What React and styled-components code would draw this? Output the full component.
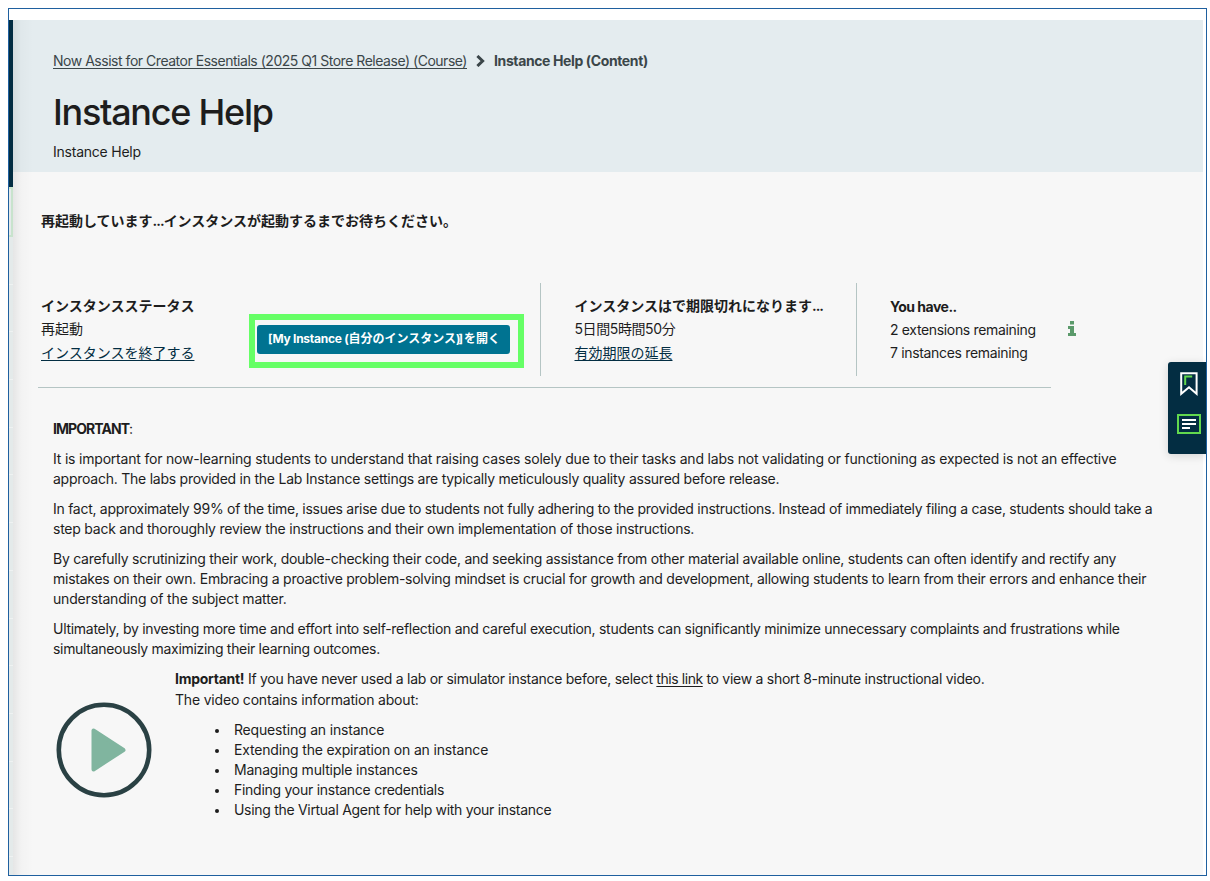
import React from "react";
import styled, { createGlobalStyle } from "styled-components";

const GlobalStyle = createGlobalStyle`
  * {
    box-sizing: border-box;
  }
  body {
    margin: 0;
    background: #ffffff;
    color: #1d1d1d;
    font-family: Inter, "Noto Sans CJK JP", sans-serif;
    font-size: 14px;
    line-height: 20px;
  }
`;

const edgeShadow =
  "linear-gradient(to right, rgba(0, 0, 0, 0.07), rgba(0, 0, 0, 0.02) 8px, rgba(0, 0, 0, 0) 20px)";

const Frame = styled.div`
  position: relative;
  display: flex;
  width: 1199px;
  height: 868px;
  margin: 8px 0 0 8px;
  padding: 11px 3px 0 0;
  border: 1px solid #1f609f;
  overflow: hidden;
`;

const Rail = styled.div`
  flex: none;
  display: flex;
  flex-direction: column;
  width: 4px;
  background: #e4eaea;
`;

const RailTop = styled.div`
  flex: none;
  height: 167px;
  background: #032d42;
`;

const RailItem = styled.div`
  flex: none;
  height: 50px;
  border: 2px solid #c8e3cd;
  border-left: none;
`;

const RailRow = styled.div`
  flex: none;
  height: 47.7px;
  border-bottom: 1px solid #eff2f2;
`;

const Page = styled.main`
  flex: 1;
  min-width: 0;
  background: ${edgeShadow} #f7f7f7;
`;

const Header = styled.header`
  height: 152px;
  padding: 31px 40px 0;
  background: ${edgeShadow} #e4ecef;
`;

const Breadcrumb = styled.nav`
  display: flex;
  align-items: center;
  color: #3b4649;
  white-space: nowrap;
`;

const Chevron = styled.svg`
  width: 10px;
  height: 12px;
  margin: 0 8px 0 9px;
`;

const Title = styled.h1`
  margin: 19px 0 0;
  font-size: 36px;
  line-height: 44px;
  font-weight: 500;
`;

const Subtitle = styled.p`
  margin: 8px 0 0;
`;

const Line = styled.span`
  display: block;
  width: max-content;
  white-space: nowrap;
  letter-spacing: ${props => props.$spacing || 0}px;
`;

const Tight = styled.span`
  letter-spacing: ${props => props.$spacing}px;
`;

const Link = styled.a`
  color: ${props => props.$color || "inherit"};
  text-decoration: underline;
  text-underline-offset: 2px;
`;

const Notice = styled.p`
  margin: 39px 0 0 28px;
  font-weight: 700;
`;

const StatusBar = styled.section`
  display: flex;
  width: 1013px;
  height: 157px;
  margin-left: 25px;
  padding: 52px 0 11px;
  border-bottom: 1px solid #b5c5c4;
`;

const StatusCell = styled.div`
  flex: none;
  display: flex;
  width: ${props => props.$width}px;
  padding: ${props => props.$padding};
  border-right: ${props => (props.$last ? "none" : "1px solid #b5c5c4")};
`;

const StatusText = styled.div`
  flex: none;
  width: ${props => props.$width || "auto"};
  line-height: ${props => props.$leading || 23.4}px;
  padding-top: ${props => props.$top || 11}px;
`;

const Highlight = styled.div`
  flex: none;
  width: 275px;
  height: 54px;
  margin: 31px 0 0 55px;
  padding: 5px 8px 8px 2px;
  border: 6px solid #66ff66;
`;

const OpenButton = styled.button`
  display: flex;
  align-items: center;
  justify-content: center;
  width: 253px;
  height: 29px;
  padding: 0 0 4px;
  border: none;
  border-radius: 3px;
  background: #007391;
  color: #ffffff;
  font: 700 12px Inter, "Noto Sans CJK JP", sans-serif;
`;

const InfoIcon = styled.svg`
  flex: none;
  width: 8px;
  height: 15px;
  margin: 38px 0 0 32px;
`;

const Article = styled.article`
  padding: 31px 40px 0;
`;

const Paragraph = styled.p`
  margin: 0 0 10px;
`;

const Video = styled.section`
  display: flex;
`;

const PlayIcon = styled.svg`
  flex: none;
  width: 96px;
  height: 96px;
  margin: 33px 23px 0 3px;
`;

const VideoIntro = styled.div`
  margin-top: -1px;
  line-height: 21px;
`;

const Topics = styled.ul`
  margin: 10px 0 0;
  padding-left: 55px;
`;

const Topic = styled.li`
  padding-left: 4px;

  &::marker {
    font-size: 12px;
  }
`;

const SideTools = styled.aside`
  position: absolute;
  top: 353px;
  right: 0;
  display: flex;
  flex-direction: column;
  align-items: center;
  width: 38px;
  height: 92px;
  padding: 10px 0 0 4px;
  gap: 18px;
  border-radius: 3px 0 0 3px;
  background: #032d42;
  box-shadow: 0 2px 10px rgba(0, 0, 0, 0.14);
`;

const topics = [
  ["Requesting an instance", -0.18],
  ["Extending the expiration on an instance", -0.17],
  ["Managing multiple instances", -0.2],
  ["Finding your instance credentials", -0.27],
  ["Using the Virtual Agent for help with your instance", -0.3],
];

const paragraphs = [
  [
    ["It is important for now-learning students to understand that raising cases solely due to their tasks and labs not validating or functioning as expected is not an effective", -0.2],
    ["approach. The labs provided in the Lab Instance settings are typically meticulously quality assured before release.", -0.245],
  ],
  [
    ["In fact, approximately 99% of the time, issues arise due to students not fully adhering to the provided instructions. Instead of immediately filing a case, students should take a", -0.277],
    ["step back and thoroughly review the instructions and their own implementation of those instructions.", -0.24],
  ],
  [
    ["By carefully scrutinizing their work, double-checking their code, and seeking assistance from other material available online, students can often identify and rectify any", -0.25],
    ["mistakes on their own. Embracing a proactive problem-solving mindset is crucial for growth and development, allowing students to learn from their errors and enhance their", -0.25],
    ["understanding of the subject matter.", -0.17],
  ],
  [
    ["Ultimately, by investing more time and effort into self-reflection and careful execution, students can significantly minimize unnecessary complaints and frustrations while", -0.284],
    ["simultaneously maximizing their learning outcomes.", -0.31],
  ],
];

const InstanceStatus = () => (
  <StatusBar>
    <StatusCell $width={503} $padding="0 0 0 3px">
      <StatusText>
        <Line as="strong">インスタンスステータス</Line>
        <Line>再起動</Line>
        <Line>
          <Link href="#" $color="#032d42">インスタンスを終了する</Link>
        </Line>
      </StatusText>
      <Highlight>
        <OpenButton>
          <Line>
            <Tight $spacing={-0.25}>[My Instance (</Tight>自分のインスタンス<Tight $spacing={-2}>)]</Tight> を開く
          </Line>
        </OpenButton>
      </Highlight>
    </StatusCell>
    <StatusCell $width={316} $padding="0 0 0 33.5px">
      <StatusText>
        <Line as="strong">
          インスタンスはで期限切れになります<Tight $spacing={-1}>...</Tight>
        </Line>
        <Line $spacing={-0.4}>5日間5時間50分</Line>
        <Line>
          <Link href="#" $color="#032d42">有効期限の延長</Link>
        </Line>
      </StatusText>
    </StatusCell>
    <StatusCell $last $width={194} $padding="0 0 0 33px">
      <StatusText $top={12} $leading={23.1} $width="146px">
        <Line as="strong" $spacing={-0.5}>You have..</Line>
        <Line $spacing={-0.34}>2 extensions remaining</Line>
        <Line $spacing={-0.33}>7 instances remaining</Line>
      </StatusText>
      <InfoIcon viewBox="0 0 8 15" fill="#5b9a6b">
        <path d="M2 0h4v3.5H2zM0 5h6v7h2v3H0v-3h2V8H0z" />
      </InfoIcon>
    </StatusCell>
  </StatusBar>
);

const VideoHelp = () => (
  <Video>
    <PlayIcon viewBox="0 0 96 96">
      <circle cx="48" cy="48" r="45.2" fill="none" stroke="#2a4144" strokeWidth="4.6" />
      <path d="M37.5 28.5v39l30-19.5z" fill="#80b59f" stroke="#80b59f" strokeWidth="4" strokeLinejoin="round" />
    </PlayIcon>
    <div>
      <VideoIntro>
        <Line $spacing={-0.275}>
          <strong>Important!</strong> If you have never used a lab or simulator instance before, select{" "}
          <Tight $spacing={-0.44}>
            <Link href="#">this link</Link>
          </Tight>{" "}
          to view a short 8-minute instructional video.
        </Line>
        <Line $spacing={-0.19}>The video contains information about:</Line>
      </VideoIntro>
      <Topics>
        {topics.map(([text, spacing]) => (
          <Topic key={text}>
            <Line $spacing={spacing}>{text}</Line>
          </Topic>
        ))}
      </Topics>
    </div>
  </Video>
);

export default function App() {
  return (
    <>
      <GlobalStyle />
      <Frame>
        <Rail>
          <RailTop />
          <RailItem />
          {Array.from({ length: 13 }, (_, i) => (
            <RailRow key={i} />
          ))}
        </Rail>
        <Page>
          <Header>
            <Breadcrumb>
              <Line $spacing={-0.475}>
                <Link href="#">Now Assist for Creator Essentials (2025 Q1 Store Release) (Course)</Link>
              </Line>
              <Chevron viewBox="0 0 10 12" fill="none" stroke="#3b4649" strokeWidth="3">
                <path d="M1.4 1 6.6 6 1.4 11" />
              </Chevron>
              <Line as="strong" $spacing={-0.38}>Instance Help (Content)</Line>
            </Breadcrumb>
            <Title>
              <Line $spacing={-1.27}>Instance Help</Line>
            </Title>
            <Subtitle>
              <Line $spacing={-0.23}>Instance Help</Line>
            </Subtitle>
          </Header>
          <Notice>
            <Line>
              再起動しています<Tight $spacing={-1}>...</Tight>インスタンスが起動するまでお待ちください。
            </Line>
          </Notice>
          <InstanceStatus />
          <Article>
            <Paragraph>
              <Line $spacing={-0.95}>
                <strong>IMPORTANT</strong>:
              </Line>
            </Paragraph>
            {paragraphs.map((lines, i) => (
              <Paragraph key={i}>
                {lines.map(([text, spacing]) => (
                  <Line key={text} $spacing={spacing}>{text}</Line>
                ))}
              </Paragraph>
            ))}
            <VideoHelp />
          </Article>
        </Page>
        <SideTools>
          <svg width="18" height="24" viewBox="0 0 18 24" fill="none">
            <path d="M1.2 1.2h15.4v20.6L9 15.2l-7.8 6.6z" stroke="#ffffff" strokeWidth="2" />
            <path d="M5.2 13V4.6h7" stroke="#62d84e" strokeWidth="2" />
          </svg>
          <svg width="24" height="20" viewBox="0 0 24 20" fill="none">
            <path d="M1 1h22v18H1z" stroke="#62d84e" strokeWidth="2" />
            <path d="M5 6h14M5 10h14M5 14h8" stroke="#ffffff" strokeWidth="2" />
          </svg>
        </SideTools>
      </Frame>
    </>
  );
}
